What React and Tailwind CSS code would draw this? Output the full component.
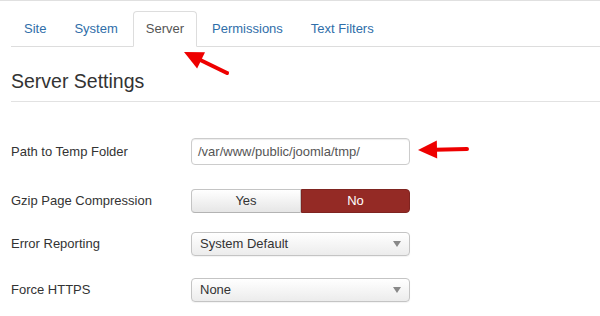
import { useState } from "react";

const tabs = ["Site", "System", "Server", "Permissions", "Text Filters"];

function Arrow({ x1, y1, x2, y2 }) {
  // arrow from tail (x1,y1) to tip (x2,y2)
  const dx = x2 - x1;
  const dy = y2 - y1;
  const len = Math.sqrt(dx * dx + dy * dy);
  const ux = dx / len;
  const uy = dy / len;
  const head = 19;
  const half = 9;
  const bx = x2 - ux * head;
  const by = y2 - uy * head;
  const pts = `${x2},${y2} ${bx - uy * half},${by + ux * half} ${bx + uy * half},${by - ux * half}`;
  return (
    <g>
      <line x1={x1} y1={y1} x2={bx + ux * 2} y2={by + uy * 2} stroke="#ee0000" strokeWidth="4" strokeLinecap="round" />
      <polygon points={pts} fill="#ee0000" />
    </g>
  );
}

function Row({ label, className, children }) {
  return (
    <div className={`flex items-center ${className}`}>
      <div className="w-[191px] shrink-0 pl-[11px] text-[13px] text-[#333]">{label}</div>
      {children}
    </div>
  );
}

function Select({ value }) {
  return (
    <div className="w-[219px] h-[24px] flex items-center justify-between pl-[8px] pr-[8px] rounded-[4px] border border-[#c4c4c4] bg-gradient-to-b from-white to-[#ececec] text-[13px] text-[#333] shadow-[0_1px_1px_rgba(0,0,0,0.05)]">
      <span>{value}</span>
      <svg width="8" height="6" viewBox="0 0 8 6">
        <path d="M0 0 L8 0 L4 6 Z" fill="#888" />
      </svg>
    </div>
  );
}

export default function App() {
  const [active] = useState("Server");

  return (
    <div
      className="relative w-[600px] h-[316px] overflow-hidden bg-white border-t border-[#e0e0e0]"
      style={{ fontFamily: '"Liberation Sans", Arial, sans-serif' }}
    >
      <div className="ml-[11px] pt-[10px] flex gap-[2px] border-b border-[#ddd]">
        {tabs.map((t) =>
          t === active ? (
            <div
              key={t}
              className="h-[36px] -mb-px px-[12px] flex items-center text-[13px] text-[#555] bg-white border border-[#ddd] border-b-white rounded-t-[4px]"
            >
              {t}
            </div>
          ) : (
            <div
              key={t}
              className="h-[35px] px-[12px] flex items-center text-[13px] text-[#2f6ea9] border border-transparent"
            >
              {t}
            </div>
          )
        )}
      </div>

      <div className="ml-[11px] pt-[22px] pb-[8px] border-b border-[#e2e2e2]">
        <h2 className="text-[19.5px] leading-[24px] text-[#333]">Server Settings</h2>
      </div>

      <Row label="Path to Temp Folder" className="mt-[36px]">
        <div className="w-[219px] h-[27px] flex items-center px-[6px] rounded-[4px] border border-[#ccc] bg-white text-[13px] text-[#555] shadow-[inset_0_1px_1px_rgba(0,0,0,0.075)]">
          /var/www/public/joomla/tmp/
        </div>
      </Row>

      <Row label="Gzip Page Compression" className="mt-[24px]">
        <div className="flex w-[219px] h-[24px] text-[13px]">
          <div className="w-[110px] flex items-center justify-center rounded-l-[4px] border border-[#c4c4c4] border-b-[#b3b3b3] bg-gradient-to-b from-white to-[#e6e6e6] text-[#333]">
            Yes
          </div>
          <div className="flex-1 flex items-center justify-center rounded-r-[4px] bg-[#942a25] border border-[#7f2420] text-white">
            No
          </div>
        </div>
      </Row>

      <Row label="Error Reporting" className="mt-[19px]">
        <Select value="System Default" />
      </Row>

      <Row label="Force HTTPS" className="mt-[22px]">
        <Select value="None" />
      </Row>

      <svg className="absolute left-0 top-0 pointer-events-none" width="600" height="316">
        <Arrow x1={227} y1={72} x2={184} y2={51} />
        <Arrow x1={467} y1={148} x2={418} y2={149} />
      </svg>
    </div>
  );
}
